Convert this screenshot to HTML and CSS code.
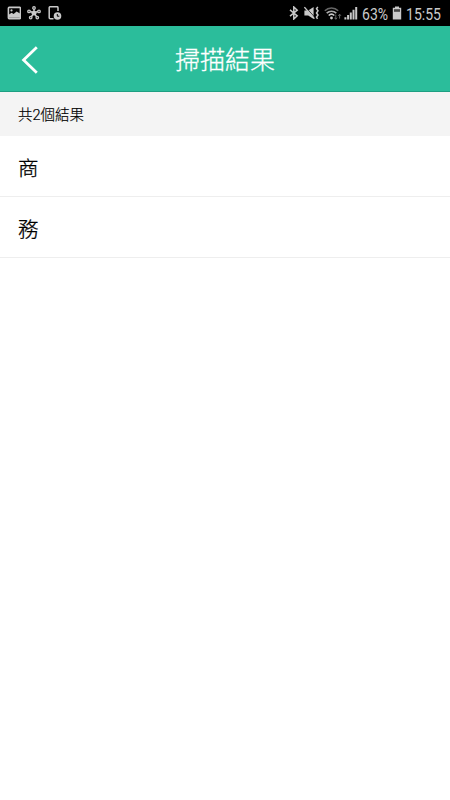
FILE: index.html
```html
<!DOCTYPE html>
<html lang="zh-Hant">
<head>
    <meta charset="UTF-8">
    <meta name="viewport" content="width=device-width, initial-scale=1.0">
    <title>掃描結果</title>
    <link rel="stylesheet" href="styles.css">
</head>
<body>
    <div class="status-bar">
        <div class="status-left">
            <!-- picture -->
            <svg width="14" height="14" viewBox="0 0 14 14">
                <rect x="1.4" y="1.4" width="12" height="11.2" rx="0.8" fill="none" stroke="currentColor" stroke-width="1.6"/>
                <path d="M2 11.8V8.6l2.6-1.8 2 1.2 3-2.6L13 7.6v4.2z" fill="currentColor"/>
                <circle cx="4.5" cy="4.4" r="1.1" fill="currentColor"/>
            </svg>
            <!-- hub -->
            <svg width="14" height="14" viewBox="0 0 14 14">
                <path d="M7 7V2.2M7 7L2.2 5M7 7l4.8-2M7 7l-3.2 4.5M7 7l3.2 4.5" stroke="currentColor" stroke-width="1.5"/>
                <g fill="#333" stroke="currentColor" stroke-width="1.2">
                    <circle cx="7" cy="2" r="1.3"/>
                    <circle cx="2" cy="5.4" r="1.3"/>
                    <circle cx="12" cy="5.4" r="1.3"/>
                    <circle cx="3.7" cy="11.6" r="1.3"/>
                    <circle cx="10.3" cy="11.6" r="1.3"/>
                </g>
                <circle cx="7" cy="7.2" r="2.4" fill="currentColor"/>
            </svg>
            <!-- device with clock -->
            <svg class="icon-device" width="14" height="14" viewBox="0 0 14 14">
                <path d="M5.5 12.8H2.2a1 1 0 0 1-1-1V1.7a1 1 0 0 1 1-1h6.8a1 1 0 0 1 1 1V5" fill="none" stroke="currentColor" stroke-width="1.5"/>
                <circle cx="9.5" cy="10" r="3.8" fill="currentColor"/>
                <path d="M9.3 8v2.2h2" fill="none" stroke="#000" stroke-width="1"/>
            </svg>
        </div>
        <div class="status-right">
            <!-- bluetooth -->
            <svg width="10" height="14" viewBox="0 0 10 14">
                <path d="M1 3.8l7.2 6L4.8 13V1l3.4 3.2-7.2 6" fill="none" stroke="currentColor" stroke-width="1.5"/>
            </svg>
            <!-- mute / vibrate -->
            <svg class="icon-mute" width="15" height="14" viewBox="0 0 15 14">
                <path d="M.4 4.4h3.8L9.6 1v12L4.2 9.6H.4z" fill="currentColor"/>
                <path d="M1.6 1l9 10.2" stroke="#000" stroke-width="0.8"/>
                <path d="M.4 1.2l10 11.4" stroke="currentColor" stroke-width="1.4"/>
                <path d="M13.8.8l-1.3 2 1.5 2-1.5 2.2 1.5 2-1.5 2 1 1.8" fill="none" stroke="currentColor" stroke-width="1.5"/>
            </svg>
            <!-- wifi -->
            <svg class="icon-wifi" width="18" height="14" viewBox="0 0 18 14">
                <g fill="none" stroke-width="1.6">
                    <path d="M.8 4.7a9.5 9.5 0 0 1 13.4 0" stroke="#666"/>
                    <path d="M2.7 7.2a7 7 0 0 1 9.6 0" stroke="#aaa"/>
                    <path d="M4.7 9.5a4.1 4.1 0 0 1 5.6 0" stroke="#ccc"/>
                </g>
                <circle cx="7.5" cy="12" r="1.4" fill="#ccc"/>
                <path d="M11.8 8.6v4.5M10.5 11.7l1.3 1.6 1.3-1.6M15.6 12.6V8.2m-1.3 1.6l1.3-1.6 1.3 1.6" fill="none" stroke="#666" stroke-width="1"/>
            </svg>
            <!-- signal -->
            <svg class="icon-signal" width="14" height="14" viewBox="0 0 14 14">
                <path d="M.4 11.2h2V13.4h-2zM3.1 9h2v4.4h-2zM5.8 6.4h2v7h-2zM8.5 3.8h2v9.6h-2zM11.2 1h2v12.4h-2z" fill="currentColor"/>
            </svg>
            <span class="battery-level">63%</span>
            <!-- battery -->
            <svg class="icon-battery" width="10" height="14" viewBox="0 0 10 14">
                <path d="M3 .4h4v1.4h2.2v11.7H.8V1.8H3z" fill="currentColor"/>
                <path d="M2 3.2h6v2.6H2z" fill="#444"/>
            </svg>
            <span class="clock">15:55</span>
        </div>
    </div>

    <header class="header">
        <button class="back-btn" aria-label="返回">
            <svg width="18" height="28" viewBox="0 0 18 28">
                <path d="M15.8 1.2L2.6 14l13.2 12.8" fill="none" stroke="currentColor" stroke-width="2.8"/>
            </svg>
        </button>
        <h1 class="title">掃描結果</h1>
    </header>

    <div class="result-count">共2個結果</div>

    <ul class="result-list">
        <li class="result-item">商</li>
        <li class="result-item">務</li>
    </ul>
</body>
</html>
```
FILE: styles.css
```css
:root {
    --main-color: #2bbd9b;
    --main-border: #1e9f82;
    --status-color: #c9c9c9;
    --count-bg: #f4f4f4;
    --line-color: #eeeeee;
}

* {
    margin: 0;
    padding: 0;
    box-sizing: border-box;
    font-family: Roboto, "Noto Sans CJK TC", sans-serif;
}

body {
    min-height: 100vh;
    background: #fff;
    color: #000;
}

svg {
    display: block;
    flex: none;
}

.status-bar {
    display: flex;
    justify-content: space-between;
    height: 26px;
    padding: 0 8px 0 7px;
    background: #000;
    color: var(--status-color);
}

.status-left,
.status-right {
    display: flex;
    align-items: center;
}

.status-left {
    gap: 6px;
}

.icon-device {
    margin-left: 1px;
}

.icon-mute {
    margin-left: 5px;
}

.icon-wifi {
    margin-left: 5px;
}

.icon-signal {
    margin-left: 2px;
}

.battery-level,
.clock {
    font-size: 16.5px;
    line-height: 26px;
    white-space: nowrap;
    transform: scaleX(0.85);
    transform-origin: left;
    padding-top: 3px;
}

.battery-level {
    width: 26px;
    margin-left: 4px;
}

.icon-battery {
    margin-left: 4px;
}

.clock {
    width: 36px;
    margin-left: 4px;
}

.header {
    display: grid;
    grid-template-columns: 60px 1fr 60px;
    align-items: center;
    height: 66px;
    background: var(--main-color);
    border-bottom: 1px solid var(--main-border);
    color: #fff;
}

.back-btn {
    padding: 2px 0 0 21px;
    background: none;
    border: none;
    color: #fff;
    cursor: pointer;
}

.title {
    padding-top: 5px;
    font-size: 25px;
    font-weight: 300;
    line-height: 36px;
    text-align: center;
    -webkit-text-stroke: 0.3px;
}

.result-count {
    height: 44px;
    padding: 2px 0 0 18px;
    background: var(--count-bg);
    font-size: 14.5px;
    font-weight: 300;
    line-height: 44px;
    -webkit-text-stroke: 0.2px;
}

.result-list {
    list-style: none;
}

.result-item {
    height: 61px;
    padding: 3px 0 0 18px;
    border-bottom: 1px solid var(--line-color);
    font-size: 20.5px;
    font-weight: 300;
    line-height: 61px;
    -webkit-text-stroke: 0.3px;
}
```
